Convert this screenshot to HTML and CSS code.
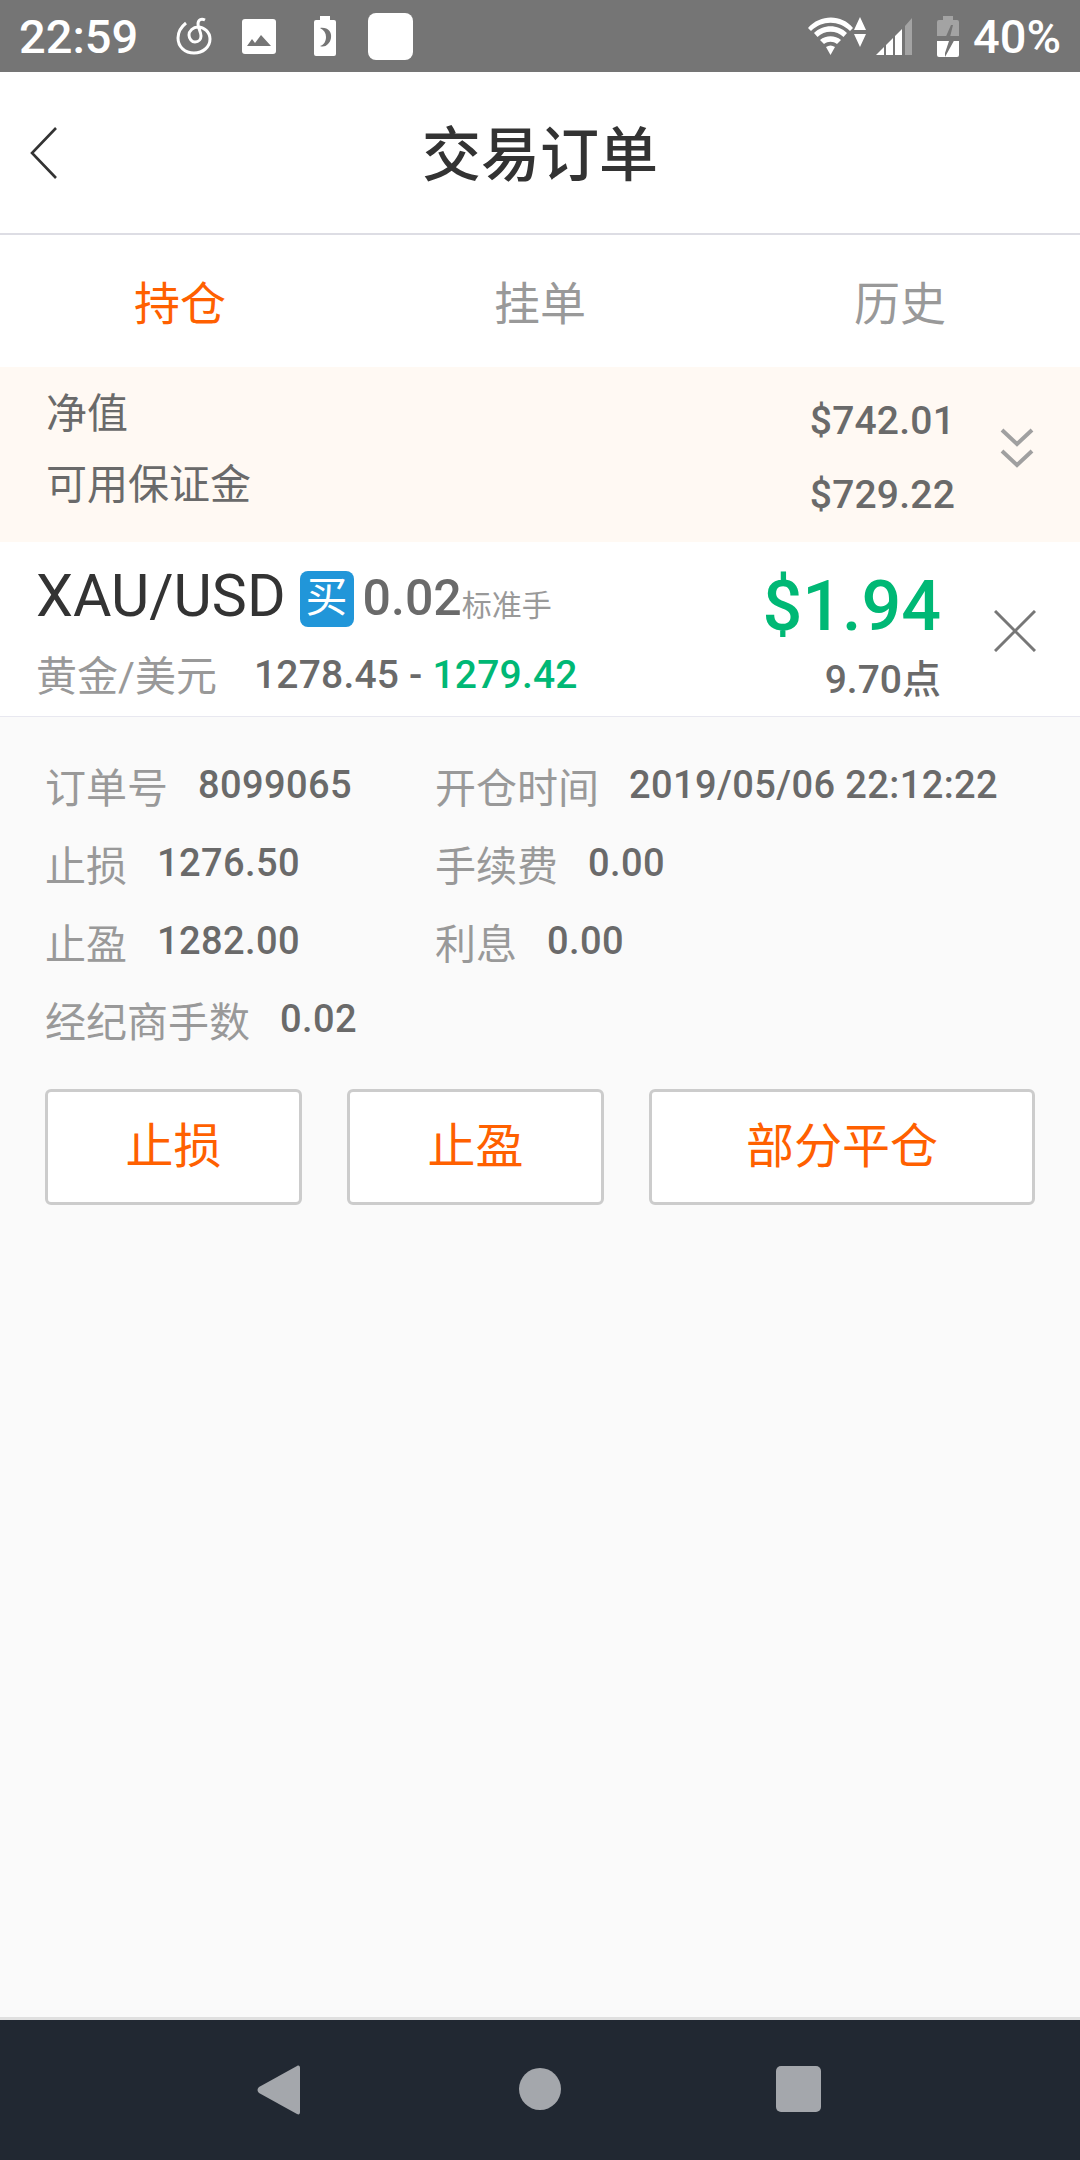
FILE: index.html
```html
<!DOCTYPE html>
<html lang="zh-CN">
<head>
    <meta charset="UTF-8">
    <title>交易订单</title>
    <link rel="stylesheet" href="styles.css">
</head>
<body>
<div class="page">
    <div class="status">
        <span class="time">22:59</span>
        <svg class="ic-music" width="36" height="38" viewBox="0 0 36 38" fill="none" stroke="#fff" stroke-width="3"><path d="M10 6C5 10 2 15 2 21c0 9 7 15 16 15s16-6 16-14c0-7-6-12-12-12-5 0-9 4-9 8 0 4 3 7 6 7 4 0 6-3 6-6 0-4-3-8-3-12 0-4 3-6 7-4"/></svg>
        <svg class="ic-image" width="34" height="35" viewBox="0 0 34 35"><rect width="34" height="35" rx="3" fill="#fff"/><path d="M5 27l5-7 3 4 6-8 10 11z" fill="#757575"/></svg>
        <svg class="ic-save" width="22" height="40" viewBox="0 0 22 40"><path d="M6 0h10v4h4a2 2 0 012 2v32a2 2 0 01-2 2H2a2 2 0 01-2-2V6a2 2 0 012-2h4z" fill="#fff"/><path d="M6 12c8-1 12 4 11 10s-6 10-11 8c4-1 6-5 6-9s-2-7-6-9z" fill="#757575"/></svg>
        <span class="notice"></span>
        <span class="grow"></span>
        <svg class="ic-wifi" width="58" height="40" viewBox="0 0 58 40"><path d="M0 12C12-2 34-2 45 12l-3 3C31 4 14 4 3 15z" fill="#fff"/><path d="M6 17c9-9 24-9 33 0l-3.500 4c-7-7-19-7-26 0z" fill="#fff"/><path d="M12 24c6-5 15-5 21 0l-4 4c-4-3-9-3-13 0z" fill="#fff"/><path d="M18 31c3-2 6-2 9 0l-4.500 8z" fill="#fff"/><path d="M52 1l6 13H46zM46 18h12l-6 13z" fill="#fff"/></svg>
        <svg class="ic-signal" width="36" height="37" viewBox="0 0 36 37"><path d="M0 37l8-8v8z" fill="#fff"/><path d="M10 27l7-7v17h-7zM19 18l7-7v26h-7z" fill="#fff"/><path d="M29 8l7-8v37h-7z" fill="#a3a3a3"/></svg>
        <svg class="ic-battery" width="22" height="41" viewBox="0 0 22 41"><path d="M6 0h10v4h4a2 2 0 012 2v14H0V6a2 2 0 012-2h4z" fill="#a3a3a3"/><path d="M0 25h22v14a2 2 0 01-2 2H2a2 2 0 01-2-2z" fill="#fff"/><path d="M14 9l-7 16h5l-4 12 0 4 11-20h-6l3-12z" fill="#757575"/></svg>
        <span class="pct">40%</span>
    </div>

    <div class="header">
        <svg class="back" width="28" height="52" viewBox="0 0 28 52" fill="none" stroke="#333" stroke-width="2.600"><path d="M26 1L2 26l24 25"/></svg>
        <h1>交易订单</h1>
    </div>

    <div class="tabs">
        <span class="current">持仓</span>
        <span>挂单</span>
        <span>历史</span>
    </div>

    <div class="summary">
        <div class="sum-labels">
            <span>净值</span>
            <span>可用保证金</span>
        </div>
        <div class="sum-values">
            <span>$742.01</span>
            <span>$729.22</span>
        </div>
        <svg class="more" width="34" height="40" viewBox="0 0 34 40" fill="none" stroke="#a0a0a0" stroke-width="4"><path d="M2 2l15 14L32 2M2 23l15 14 15-14"/></svg>
    </div>

    <div class="order">
        <div class="order-left">
            <div class="order-top">
                <span class="symbol">XAU/USD</span>
                <span class="badge">买</span>
                <span class="lots">0.02</span><span class="unit">标准手</span>
            </div>
            <div class="order-sub">
                <span class="cn-name">黄金/美元</span>
                <span class="prices">1278.45 - <em>1279.42</em></span>
            </div>
        </div>
        <div class="order-right">
            <span class="profit">$1.94</span>
            <span class="points">9.70点</span>
        </div>
        <svg class="close" width="42" height="42" viewBox="0 0 42 42" stroke="#777" stroke-width="3"><path d="M1 1l40 40M41 1L1 41"/></svg>
    </div>

    <div class="detail">
        <div class="info">
            <div class="cell"><label>订单号</label><b>8099065</b></div>
            <div class="cell"><label>开仓时间</label><b>2019/05/06 22:12:22</b></div>
            <div class="cell"><label>止损</label><b>1276.50</b></div>
            <div class="cell"><label>手续费</label><b>0.00</b></div>
            <div class="cell"><label>止盈</label><b>1282.00</b></div>
            <div class="cell"><label>利息</label><b>0.00</b></div>
            <div class="cell"><label>经纪商手数</label><b>0.02</b></div>
        </div>
        <div class="btns">
            <a href="#" class="btn">止损</a>
            <a href="#" class="btn">止盈</a>
            <a href="#" class="btn wide">部分平仓</a>
        </div>
    </div>

    <div class="nav">
        <svg width="44" height="50" viewBox="0 0 44 50"><path d="M40 1c2-1 3 0 3 2v44c0 2-1 3-3 2L2 28c-2-2-2-4 0-6z" fill="#a4a7ac"/></svg>
        <span class="nav-home"></span>
        <span class="nav-recent"></span>
    </div>
</div>
</body>
</html>
```

FILE: styles.css
```css
* {
    margin: 0;
    padding: 0;
    box-sizing: border-box;
}

body {
    width: 1080px;
    height: 2160px;
    font-family: Roboto, "Noto Sans CJK SC", sans-serif;
    background-color: #fff;
}

.page {
    height: 2160px;
    display: flex;
    flex-direction: column;
}

.status {
    height: 72px;
    background-color: #757575;
    color: #fff;
    display: flex;
    align-items: center;
    padding: 0 19px 0 19px;
    font-size: 47px;
    font-weight: 500;
}

.time {
    width: 157px;
}

.ic-image {
    margin-left: 30px;
}

.ic-save {
    margin-left: 38px;
}

.notice {
    width: 45px;
    height: 47px;
    margin-left: 32px;
    background-color: #fff;
    border-radius: 8px;
}

.grow {
    flex: 1;
}

.ic-signal {
    margin-left: 10px;
}

.ic-battery {
    margin-left: 25px;
}

.pct {
    margin-left: 14px;
}

.header {
    height: 163px;
    border-bottom: 2px solid #dddde4;
    position: relative;
    display: flex;
    align-items: center;
    justify-content: center;
    padding-bottom: 5px;
}

.back {
    position: absolute;
    left: 30px;
    top: 55px;
}

.header h1 {
    font-size: 59px;
    font-weight: 500;
    color: #333;
}

.tabs {
    height: 132px;
    display: grid;
    grid-template-columns: repeat(3, 1fr);
    align-items: center;
    text-align: center;
    font-size: 46px;
    color: #999;
    padding-bottom: 2px;
}

.tabs .current {
    color: #ff6000;
}

.summary {
    height: 175px;
    background-color: #fff9f3;
    display: flex;
    padding: 0 46px 0 46px;
    color: #6a6a6a;
    align-items: center;
}

.sum-labels {
    flex: 1;
    display: flex;
    flex-direction: column;
    gap: 25px;
    font-size: 41px;
    line-height: 46px;
    margin-top: -11px;
}

.sum-values {
    display: flex;
    flex-direction: column;
    align-items: flex-end;
    gap: 28px;
    font-size: 39px;
    font-weight: 500;
    line-height: 46px;
    letter-spacing: 0.2px;
    margin-top: 6px;
}

.more {
    margin-left: 45px;
    margin-top: -14px;
}

.order {
    height: 175px;
    border-bottom: 1px solid #e8e8f0;
    display: flex;
    align-items: center;
    padding: 0 44px 0 36px;
}

.order-left {
    flex: 1;
}

.order-top {
    display: flex;
    align-items: center;
    height: 70px;
}

.symbol {
    font-size: 59px;
    color: #333;
}

.badge {
    width: 54px;
    height: 56px;
    margin-left: 14px;
    margin-top: 7px;
    background-color: #2196d9;
    border-radius: 8px;
    color: #fff;
    font-size: 42px;
    text-align: center;
    line-height: 54px;
}

.lots {
    margin-left: 9px;
    font-size: 50px;
    font-weight: 500;
    color: #6a6a6a;
    margin-top: 5px;
}

.unit {
    font-size: 30px;
    color: #999;
    margin-top: 14px;
}

.order-sub {
    display: flex;
    align-items: center;
    margin-top: 17px;
    height: 50px;
}

.cn-name {
    font-size: 41px;
    color: #999;
    width: 218px;
}

.prices {
    font-size: 39px;
    font-weight: 500;
    color: #6a6a6a;
    letter-spacing: 0.2px;
    margin-top: 4px;
}

.prices em {
    font-style: normal;
    color: #00b875;
}

.order-right {
    display: flex;
    flex-direction: column;
    align-items: flex-end;
    margin-right: 53px;
    margin-top: 8px;
}

.profit {
    font-size: 70px;
    line-height: 84px;
    font-weight: 500;
    color: #00b875;
}

.points {
    font-size: 39px;
    font-weight: 500;
    line-height: 46px;
    margin-top: 9px;
    color: #6a6a6a;
}

.close {
    margin-top: 4px;
}

.detail {
    flex: 1;
    background-color: #fafafa;
    border-bottom: 3px solid #e0e0e0;
    padding: 29px 45px 0;
}

.info {
    display: grid;
    grid-template-columns: 390px 1fr;
    grid-auto-rows: 78px;
    align-items: center;
    font-size: 41px;
}

.cell {
    display: flex;
    align-items: center;
    gap: 30px;
}

.cell label {
    color: #999;
}

.cell b {
    font-weight: 500;
    color: #6a6a6a;
    font-size: 38px;
    letter-spacing: 0.4px;
}

.btns {
    display: flex;
    gap: 45px;
    margin-top: 31px;
}

.btn {
    width: 257px;
    height: 116px;
    border: 3px solid #ccc;
    border-radius: 6px;
    background-color: #fff;
    color: #ff6000;
    font-size: 48px;
    line-height: 110px;
    text-align: center;
    text-decoration: none;
}

.btn.wide {
    width: 386px;
}

.nav {
    height: 140px;
    background-color: #212832;
    display: flex;
    align-items: center;
    padding-left: 257px;
}

.nav-home {
    width: 42px;
    height: 42px;
    margin-left: 218px;
    margin-top: -2px;
    border-radius: 50%;
    background-color: #a4a7ac;
}

.nav-recent {
    width: 45px;
    height: 46px;
    margin-left: 215px;
    margin-top: -2px;
    border-radius: 5px;
    background-color: #a4a7ac;
}
```
